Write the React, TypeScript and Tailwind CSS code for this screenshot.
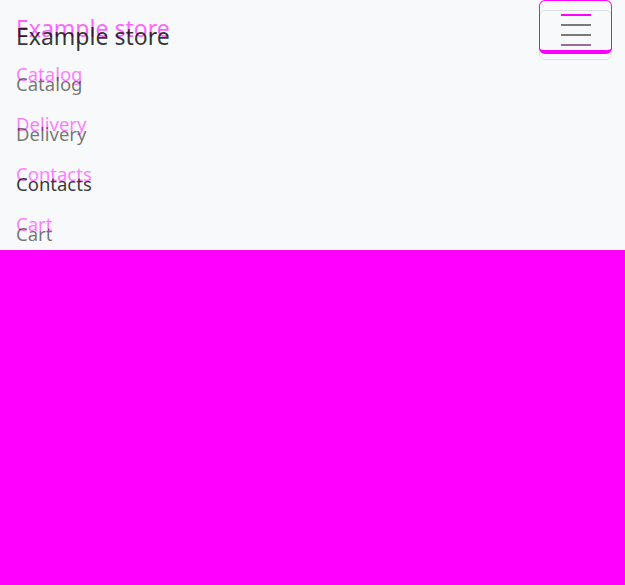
const links = ["Catalog", "Delivery", "Contacts", "Cart"];

function Burger({ ghost }: { ghost?: boolean }) {
  return (
    <svg width="30" height="22" viewBox="0 0 30 22" fill="none">
      {ghost ? (
        <path d="M0 1h30" stroke="#ff00ff" strokeWidth="2" />
      ) : (
        <>
          <path d="M0 1h30M0 11h30" stroke="#7a7a7a" strokeWidth="2" />
          <path d="M0 21h30" stroke="#9a6a9a" strokeWidth="2" />
        </>
      )}
    </svg>
  );
}

function Nav({ ghost }: { ghost?: boolean }) {
  return (
    <div className="flex flex-col">
      <div className="flex items-center justify-between py-[10px] pl-4 pr-[13px]">
        <a
          className={
            "text-[23px] leading-[30px] mt-[2px] " +
            (ghost ? "text-[#ff00ff]/60" : "text-black/80")
          }
        >
          Example store
        </a>
        <button
          className={
            "w-[73px] flex items-center justify-center rounded-md border " +
            (ghost
              ? "h-[54px] border-[#ff00ff] border-b-4 items-start pt-[13px]"
              : "h-[50px] border-black/10")
          }
        >
          <Burger ghost={ghost} />
        </button>
      </div>
      <ul className={"flex flex-col " + (ghost ? "-mt-[15px]" : "-mt-[11px]")}>
        {links.map((l) => (
          <li key={l} className="h-[50px] pl-4">
            <a
              className={
                "text-[18.5px] leading-[50px] " +
                (ghost
                  ? "text-[#ff00ff]/50"
                  : l === "Contacts"
                  ? "text-black/80"
                  : "text-black/55")
              }
            >
              {l}
            </a>
          </li>
        ))}
      </ul>
    </div>
  );
}

export default function App() {
  return (
    <div
      className="w-[625px] h-[585px] bg-[#ff00ff] flex flex-col"
      style={{ fontFamily: '"Noto Sans", "Open Sans", sans-serif' }}
    >
      <nav className="relative h-[250px] bg-[#f8f9fa] overflow-hidden">
        <div aria-hidden className="absolute inset-x-0 -top-[10px] pointer-events-none">
          <Nav ghost />
        </div>
        <div className="relative">
          <Nav />
        </div>
      </nav>
    </div>
  );
}
